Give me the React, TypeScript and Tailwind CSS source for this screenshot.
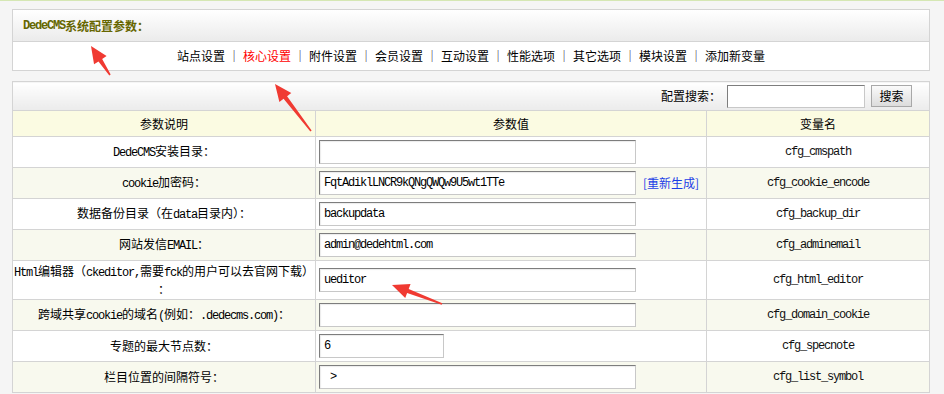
import type { ReactNode } from "react";

const mono = "font-['Liberation_Mono','Noto_Sans_CJK_SC',monospace] tracking-[-1.2px]";

function L({ children }: { children: ReactNode }) {
  return <span className={mono}>{children}</span>;
}

const navItems = [
  "站点设置",
  "核心设置",
  "附件设置",
  "会员设置",
  "互动设置",
  "性能选项",
  "其它选项",
  "模块设置",
  "添加新变量",
];

interface Row {
  label: ReactNode;
  value: string;
  short?: boolean;
  name: string;
  tall?: boolean;
  link?: boolean;
}

const rows: Row[] = [
  { label: <><L>DedeCMS</L>安装目录：</>, value: "", name: "cfg_cmspath" },
  {
    label: <><L>cookie</L>加密码：</>,
    value: "FqtAdiklLNCR9kQNgQWQw9U5wt1TTe",
    name: "cfg_cookie_encode",
    link: true,
  },
  { label: <>数据备份目录（在<L>data</L>目录内）：</>, value: "backupdata", name: "cfg_backup_dir" },
  { label: <>网站发信<L>EMAIL</L>：</>, value: "admin@dedehtml.com", name: "cfg_adminemail" },
  {
    label: (
      <>
        <L>Html</L>编辑器（<L>ckeditor,</L>需要<L>fck</L>的用户可以去官网下载）
        <br />：
      </>
    ),
    value: "ueditor",
    name: "cfg_html_editor",
    tall: true,
  },
  {
    label: <>跨域共享<L>cookie</L>的域名<L>(</L>例如：<L>.dedecms.com)</L>：</>,
    value: "",
    name: "cfg_domain_cookie",
  },
  { label: <>专题的最大节点数：</>, value: "6", short: true, name: "cfg_specnote" },
  { label: <>栏目位置的间隔符号：</>, value: " > ", name: "cfg_list_symbol" },
];

const inputCls =
  "h-[24px] border border-t-[#7d7d7d] border-l-[#7d7d7d] border-r-[#c8c8c8] border-b-[#c8c8c8] bg-white px-[4px] text-[12px] text-black outline-none shadow-[inset_1px_1px_1px_rgba(0,0,0,0.08)] " +
  mono;

function Arrow({ x1, y1, x2, y2 }: { x1: number; y1: number; x2: number; y2: number }) {
  const dx = x2 - x1;
  const dy = y2 - y1;
  const len = Math.hypot(dx, dy);
  const ux = dx / len;
  const uy = dy / len;
  const nx = -uy;
  const ny = ux;
  const head = 17;
  const hw = 7.5;
  const sw = 2.2;
  const tw = 0.8;
  const bx = x2 - ux * head;
  const by = y2 - uy * head;
  const pts = [
    [x1 + nx * tw, y1 + ny * tw],
    [bx + nx * sw, by + ny * sw],
    [bx + nx * hw, by + ny * hw],
    [x2, y2],
    [bx - nx * hw, by - ny * hw],
    [bx - nx * sw, by - ny * sw],
    [x1 - nx * tw, y1 - ny * tw],
  ]
    .map((p) => p.join(","))
    .join(" ");
  return <polygon points={pts} fill="#f03a32" />;
}

export default function App() {
  return (
    <div className="relative min-h-screen overflow-hidden border-t border-[#d5e7b4] bg-[#f5f5f5] pt-[8px] font-['Noto_Sans_CJK_SC','Liberation_Sans',sans-serif] text-[12px] leading-[16px] text-black">
      <div className="ml-[12px] w-[918px] border border-[#d4d4d4] bg-white">
        <div className="flex h-[32px] items-center border-b border-[#d4d4d4] bg-linear-to-b from-white to-[#ebebeb] pl-[10px] font-bold text-[#666600]">
          <span className="font-['Liberation_Mono','Noto_Sans_CJK_SC',monospace] tracking-[-1.2px]">DedeCMS</span>
          系统配置参数：
        </div>
        <div className="flex h-[28px] items-center justify-center">
          {navItems.map((item, i) => (
            <span key={item} className="flex items-center">
              {i > 0 && (
                <span className="mx-[8px] inline-block h-[12px] w-[2px] border-l border-[#f0d2a4] bg-[#9cbcf2]" />
              )}
              <span className={i === 1 ? "text-[#ff0000]" : "text-black"}>{item}</span>
            </span>
          ))}
        </div>
      </div>

      <table className="mt-[10px] ml-[12px] w-[918px] table-fixed border-collapse">
        <colgroup>
          <col className="w-[303px]" />
          <col className="w-[391px]" />
          <col className="w-[223px]" />
        </colgroup>
        <tbody>
          <tr>
            <td
              colSpan={3}
              className="h-[29px] border border-[#d4d4d4] bg-linear-to-b from-white to-[#ebebeb] pr-[17px]"
            >
              <div className="flex items-center justify-end">
                <span className="mr-[6px]">配置搜索：</span>
                <input className="h-[23px] w-[138px] border border-t-[#7d7d7d] border-l-[#7d7d7d] border-r-[#c8c8c8] border-b-[#c8c8c8] bg-white outline-none" />
                <button className="ml-[6px] h-[22px] w-[41px] border border-[#a8a8a8] bg-linear-to-b from-[#fafafa] to-[#dcdcdc] text-[12px] leading-[20px]">
                  搜索
                </button>
              </div>
            </td>
          </tr>
          <tr className="bg-[#fbfbe2] text-center">
            <td className="h-[26px] border border-[#d4d4d4]">参数说明</td>
            <td className="border border-[#d4d4d4]">参数值</td>
            <td className="border border-[#d4d4d4]">变量名</td>
          </tr>
          {rows.map((r, i) => (
            <tr key={r.name} className={i % 2 === 1 ? "bg-[#f8f9ee]" : "bg-white"}>
              <td
                className={`${r.tall ? "h-[39px]" : "h-[31px]"} whitespace-nowrap border border-[#d4d4d4] px-0 text-center`}
              >
                {r.label}
              </td>
              <td className="border border-[#d4d4d4] pl-[3px]">
                <div className="flex items-center">
                  <input
                    readOnly
                    value={r.value}
                    className={`${inputCls} ${r.short ? "w-[125px]" : "w-[317px]"}`}
                  />
                  {r.link && <span className="ml-[7px] text-[#1c3ee6]">[重新生成]</span>}
                </div>
              </td>
              <td className={`border border-[#d4d4d4] text-center text-[#111] ${mono}`}>{r.name}</td>
            </tr>
          ))}
        </tbody>
      </table>

      <svg className="pointer-events-none absolute top-0 left-0" width="944" height="394">
        <Arrow x1={110} y1={74} x2={91} y2={45} />
        <Arrow x1={311} y1={130} x2={275} y2={83} />
        <Arrow x1={442} y1={303} x2={392} y2={284} />
      </svg>
    </div>
  );
}
